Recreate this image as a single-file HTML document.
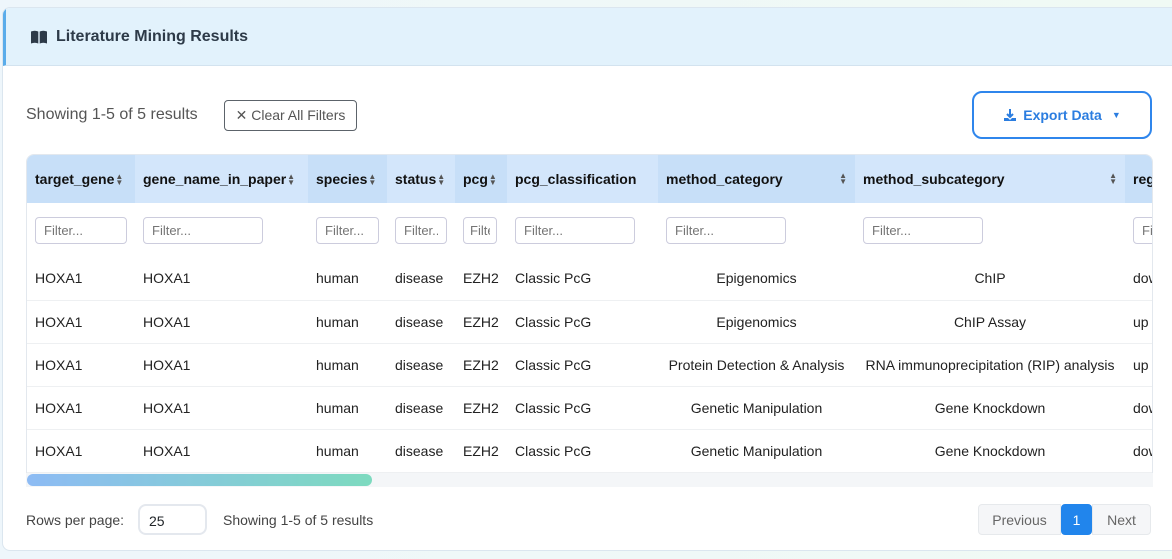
<!DOCTYPE html>
<html><head><meta charset="utf-8"><style>
*{box-sizing:border-box;margin:0;padding:0}
html,body{width:1172px;height:559px;overflow:hidden}
body{background:linear-gradient(90deg,#eef6fb,#f0faf4);font-family:"Liberation Sans",sans-serif;color:#212529;position:relative}
.card{position:absolute;left:2px;top:7px;width:1180px;height:544px;background:#fff;border:1px solid #dbe6ef;border-radius:8px;overflow:hidden}
.hdr{height:58px;background:#e2f2fc;border-bottom:1px solid #d3e3ef;border-left:3px solid #5aacea;display:flex;align-items:center;padding-left:24px;font-weight:bold;font-size:16px;color:#2d3a48}
.hdr svg{margin-right:8px}
.abs{position:absolute}
.clr{left:221px;top:92px;width:133px;height:31px;border:1px solid #5c636a;border-radius:4px;font-size:14px;color:#555;display:flex;align-items:center;justify-content:center}
.exp{left:969px;top:83px;width:180px;height:48px;border:2px solid #2f86ec;border-radius:10px;color:#2b7de0;font-weight:bold;font-size:14px;display:flex;align-items:center;justify-content:center;gap:6px}
.tbl{left:23px;top:146px;width:1127px;height:333px;border:1px solid #e3e8ee;border-radius:8px;overflow:hidden}
table{border-collapse:collapse;font-size:14px;table-layout:fixed;width:1160px}
th{height:48px;text-align:left;padding:0 8px;font-weight:bold;color:#111;white-space:nowrap;overflow:hidden;position:relative}
th.d{background:#c7dff8}th.l{background:#d3e6fb}
th .s{display:inline-block;vertical-align:middle;font-size:8px;color:#555;line-height:6px;margin-left:1px}
th .r{position:absolute;right:8px;top:18px;font-size:8px;color:#555;line-height:6px}
td{height:43px;padding:0 8px;border-bottom:1px solid #eef0f2;white-space:nowrap;overflow:hidden;color:#222}
tr.f td{height:54px;border:none}
.c{text-align:center}
input{font:13px "Liberation Sans",sans-serif;height:27px;border:1px solid #ccd;border-radius:4px;padding:0 8px;color:#666}
.sb{left:23px;top:465px;width:1127px;height:14px;background:#f4f6f8}
.th{left:24px;top:466px;width:345px;height:12px;border-radius:6px;background:linear-gradient(90deg,#8dbbf4,#7ddabf)}
.pg{top:496px;height:31px;display:flex;align-items:center;justify-content:center;font-size:14px;border:1px solid #e6e9ec;background:#f5f6f8;color:#666}
</style></head><body>
<div class="card">
<div class="hdr"><svg width="18" height="14" viewBox="0 0 18 14"><path d="M1 1.5C3.5 0.5 6 0.5 8.3 1.5V13.5C6 12.5 3.5 12.5 1 13.5Z M9.7 1.5C12 0.5 14.5 0.5 17 1.5V13.5C14.5 12.5 12 12.5 9.7 13.5Z" fill="#2d3a48"/></svg>Literature Mining Results</div>
<div class="abs" style="left:23px;top:98px;font-size:16px;color:#555">Showing 1-5 of 5 results</div>
<div class="abs clr">✕ Clear All Filters</div>
<div class="abs exp"><svg width="14" height="14" viewBox="0 0 14 14"><path d="M7 1V9M4 6L7 9L10 6" stroke="#2b7de0" stroke-width="2" fill="none"/><path d="M1 10H5L7 12L9 10H13V13H1Z" fill="#2b7de0"/></svg>Export Data <span style="font-size:9px;margin-left:4px">▼</span></div>
<div class="abs tbl"><table>
<colgroup><col style="width:108px"><col style="width:173px"><col style="width:79px"><col style="width:68px"><col style="width:52px"><col style="width:151px"><col style="width:197px"><col style="width:270px"><col style="width:62px"></colgroup>
<tr><th class="d">target_gene<span class="s">▲<br>▼</span></th><th class="l">gene_name_in_paper<span class="s">▲<br>▼</span></th><th class="d">species<span class="s">▲<br>▼</span></th><th class="l">status<span class="s">▲<br>▼</span></th><th class="d">pcg<span class="s">▲<br>▼</span></th><th class="l">pcg_classification</th><th class="d">method_category<span class="r">▲<br>▼</span></th><th class="l">method_subcategory<span class="r">▲<br>▼</span></th><th class="d">reg</th></tr>
<tr class="f"><td><input placeholder="Filter..." style="width:92px"></td><td><input placeholder="Filter..." style="width:120px"></td><td><input placeholder="Filter..." style="width:63px"></td><td><input placeholder="Filter..." style="width:52px"></td><td><input placeholder="Filter..." style="width:34px;padding:0 6px"></td><td><input placeholder="Filter..." style="width:120px"></td><td><input placeholder="Filter..." style="width:120px"></td><td><input placeholder="Filter..." style="width:120px"></td><td><input placeholder="Filter..." style="width:60px"></td></tr>
<tr><td>HOXA1</td><td>HOXA1</td><td>human</td><td>disease</td><td>EZH2</td><td>Classic PcG</td><td class="c">Epigenomics</td><td class="c">ChIP</td><td>down</td></tr>
<tr><td>HOXA1</td><td>HOXA1</td><td>human</td><td>disease</td><td>EZH2</td><td>Classic PcG</td><td class="c">Epigenomics</td><td class="c">ChIP Assay</td><td>up</td></tr>
<tr><td>HOXA1</td><td>HOXA1</td><td>human</td><td>disease</td><td>EZH2</td><td>Classic PcG</td><td class="c">Protein Detection &amp; Analysis</td><td class="c">RNA immunoprecipitation (RIP) analysis</td><td>up</td></tr>
<tr><td>HOXA1</td><td>HOXA1</td><td>human</td><td>disease</td><td>EZH2</td><td>Classic PcG</td><td class="c">Genetic Manipulation</td><td class="c">Gene Knockdown</td><td>down</td></tr>
<tr><td>HOXA1</td><td>HOXA1</td><td>human</td><td>disease</td><td>EZH2</td><td>Classic PcG</td><td class="c">Genetic Manipulation</td><td class="c">Gene Knockdown</td><td>down</td></tr>
</table></div>
<div class="abs sb"></div><div class="abs th"></div>
<div class="abs" style="left:23px;top:504px;font-size:14px;color:#444">Rows per page:</div>
<div class="abs" style="left:135px;top:496px;width:69px;height:31px;border:2px solid #e4e8ee;border-radius:8px;font-size:14px;padding:7px 9px">25</div>
<div class="abs" style="left:220px;top:504px;font-size:14px;color:#444">Showing 1-5 of 5 results</div>
<div class="abs pg" style="left:975px;width:83px;border-radius:4px 0 0 4px">Previous</div>
<div class="abs pg" style="left:1058px;width:31px;background:#2185ec;color:#fff;border-color:#2185ec;border-radius:4px">1</div>
<div class="abs pg" style="left:1089px;width:59px;border-radius:0 4px 4px 0">Next</div>
</div>
</body></html>
